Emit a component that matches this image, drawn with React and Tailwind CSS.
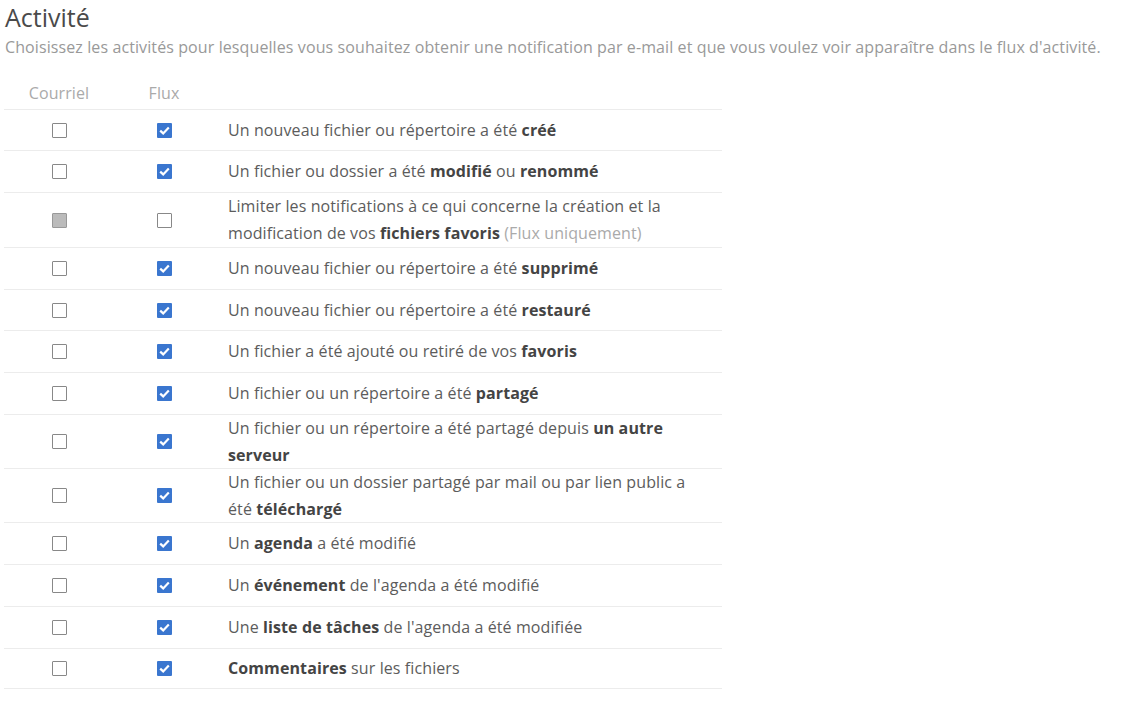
import React from "react";

const rows = [
  { mail: false, flux: true, h: 41, content: <>Un nouveau fichier ou répertoire a été <b>créé</b></> },
  { mail: false, flux: true, h: 42, content: <>Un fichier ou dossier a été <b>modifié</b> ou <b>renommé</b></> },
  { mail: "disabled", flux: false, h: 55, content: <>Limiter les notifications à ce qui concerne la création et la modification de vos <b>fichiers favoris</b> <span className="text-[#aaa]">(Flux uniquement)</span></> },
  { mail: false, flux: true, h: 42, content: <>Un nouveau fichier ou répertoire a été <b>supprimé</b></> },
  { mail: false, flux: true, h: 41, content: <>Un nouveau fichier ou répertoire a été <b>restauré</b></> },
  { mail: false, flux: true, h: 42, content: <>Un fichier a été ajouté ou retiré de vos <b>favoris</b></> },
  { mail: false, flux: true, h: 42, content: <>Un fichier ou un répertoire a été <b>partagé</b></> },
  { mail: false, flux: true, h: 54, content: <>Un fichier ou un répertoire a été partagé depuis <b>un autre serveur</b></> },
  { mail: false, flux: true, h: 54, content: <>Un fichier ou un dossier partagé par mail ou par lien public a été <b>téléchargé</b></> },
  { mail: false, flux: true, h: 42, content: <>Un <b>agenda</b> a été modifié</> },
  { mail: false, flux: true, h: 42, content: <>Un <b>événement</b> de l'agenda a été modifié</> },
  { mail: false, flux: true, h: 42, content: <>Une <b>liste de tâches</b> de l'agenda a été modifiée</> },
  { mail: false, flux: true, h: 41, content: <><b>Commentaires</b> sur les fichiers</> },
];

function Box({ state }) {
  if (state === true) {
    return (
      <div className="w-[15px] h-[15px] bg-[#3a76cf] rounded-[1px] flex items-center justify-center">
        <svg width="11" height="9" viewBox="0 0 11 9">
          <path d="M1.2 4.6 L4.2 7.4 L9.8 1.6" fill="none" stroke="white" strokeWidth="2.2" />
        </svg>
      </div>
    );
  }
  if (state === "disabled") {
    return <div className="w-[15px] h-[15px] bg-[#bbbbbb] border border-[#999] rounded-[1px]" />;
  }
  return <div className="w-[15px] h-[15px] bg-white border border-[#888] rounded-[1px]" />;
}

export default function App() {
  return (
    <div className="min-h-screen bg-white font-['Open_Sans',sans-serif] font-normal text-[#5c5c5c] tracking-[0.1px]">
      <div className="pl-[5px] pt-[1px]">
        <h2 className="text-[25px] leading-[32px] text-[#4a4a4a] font-normal tracking-normal">Activité</h2>
        <p className="mt-[2px] text-[16px] leading-[24px] text-[#999]">
          Choisissez les activités pour lesquelles vous souhaitez obtenir une notification par e-mail et que vous voulez voir apparaître dans le flux d'activité.
        </p>
      </div>
      <div className="mt-[22px] ml-[4px] w-[718px]">
        <div className="flex h-[28px] items-start text-[16px] text-[#aaa] leading-[24px]">
          <div className="w-[110px] text-center">Courriel</div>
          <div className="w-[100px] text-center">Flux</div>
        </div>
        {rows.map((r, i) => (
          <div
            key={i}
            className="flex items-center border-t border-[#ececec] last:border-b"
            style={{ height: r.h }}
          >
            <div className="w-[110px] flex justify-center">
              <Box state={r.mail} />
            </div>
            <div className="w-[100px] flex justify-center">
              <Box state={r.flux} />
            </div>
            <div className="w-[494px] pl-[14px] pr-[14px] text-[16px] leading-[27px] [&_b]:font-bold [&_b]:text-[#444]">
              {r.content}
            </div>
          </div>
        ))}
      </div>
    </div>
  );
}
